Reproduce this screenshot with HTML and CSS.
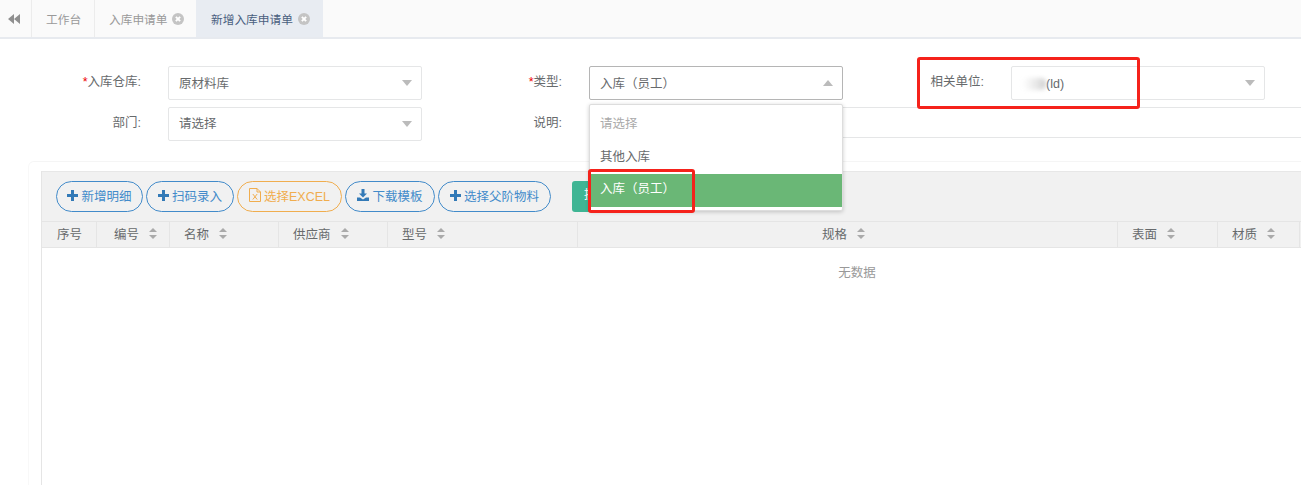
FILE: index.html
```html
<!DOCTYPE html>
<html lang="zh-CN">
<head>
    <meta charset="UTF-8">
    <title>新增入库申请单</title>
    <link rel="stylesheet" href="styles.css">
</head>
<body>

<div class="tabs">
    <div class="tab tab-back">
        <svg width="12" height="10" viewBox="0 0 12 10"><path d="M6 0v10L0 5zM12 0v10L6 5z" fill="#8f8f8f"/></svg>
    </div>
    <div class="tab tab-home">工作台</div>
    <div class="tab tab-list">入库申请单<span class="tab-close"></span></div>
    <div class="tab tab-active">新增入库申请单<span class="tab-close"></span></div>
</div>

<div class="form">
    <div class="item">
        <label><i>*</i>入库仓库:</label>
        <div class="select dark">原材料库<b class="arrow"></b></div>
    </div>
    <div class="item">
        <label><i>*</i>类型:</label>
        <div class="select open">入库（员工）<b class="arrow up"></b></div>
    </div>
    <div class="item">
        <label>相关单位:</label>
        <div class="select dark"><span class="smudge"></span>(ld)<b class="arrow"></b></div>
    </div>
    <div class="item">
        <label>部门:</label>
        <div class="select">请选择<b class="arrow"></b></div>
    </div>
    <div class="item item-wide">
        <label>说明:</label>
        <div class="note"></div>
    </div>
</div>

<div class="main">
    <div class="panel">
        <div class="toolbar">
            <a class="btn w1"><svg width="11" height="11" viewBox="0 0 11 11"><path d="M4 0h3v4h4v3H7v4H4V7H0V4h4z"/></svg>新增明细</a>
            <a class="btn w2"><svg width="11" height="11" viewBox="0 0 11 11"><path d="M4 0h3v4h4v3H7v4H4V7H0V4h4z"/></svg>扫码录入</a>
            <a class="btn btn-excel"><svg width="12" height="14" viewBox="0 0 12 14"><path d="M.5.5h7.500l3.500 3.500v9.500H.5zM8 .5V4h3.500M3.800 6l4.400 5.500M8.200 6l-4.400 5.500" fill="none" stroke="#f0ad4e"/></svg>选择EXCEL</a>
            <a class="btn w3"><svg width="12" height="12" viewBox="0 0 12 12"><path d="M4.500 0h3v4.500H10L6 8.500 2 4.500h2.500zM0 8.500h3l3 2 3-2h3V12H0z"/></svg>下载模板</a>
            <a class="btn w4"><svg width="11" height="11" viewBox="0 0 11 11"><path d="M4 0h3v4h4v3H7v4H4V7H0V4h4z"/></svg>选择父阶物料</a>
            <a class="btn-teal">提</a>
        </div>
        <div class="thead">
            <div class="th th-no">序号</div>
            <div class="th th-code">编号<span class="sort"></span></div>
            <div class="th">名称<span class="sort"></span></div>
            <div class="th">供应商<span class="sort"></span></div>
            <div class="th">型号<span class="sort"></span></div>
            <div class="th th-center">规格<span class="sort"></span></div>
            <div class="th">表面<span class="sort"></span></div>
            <div class="th">材质<span class="sort"></span></div>
        </div>
        <div class="empty">无数据</div>
    </div>
</div>

<!-- 下拉层 -->
<ul class="dropdown">
    <li class="hint">请选择</li>
    <li>其他入库</li>
    <li class="on">入库（员工）</li>
</ul>

<!-- 截图上的红框标注 -->
<div class="mark mark-unit"></div>
<div class="mark mark-type"></div>

</body>
</html>
```

FILE: styles.css
```css
* {
    margin: 0;
    padding: 0;
    box-sizing: border-box;
    list-style: none;
}

html, body {
    width: 100%;
    height: 100%;
    overflow: hidden;
}

body {
    background: #fff;
    color: #676a6c;
    font-family: "Liberation Sans", "Noto Sans CJK SC", sans-serif;
    font-size: 12.5px;
}

/* 顶部标签 */
.tabs {
    display: flex;
    height: 39px;
    background: #fafafa;
    border-bottom: 2px solid #e7eaef;
}
.tab {
    display: flex;
    align-items: center;
    height: 37px;
    font-size: 11.7px;
    color: #999;
    border-right: 1px solid #ececec;
}
.tab-back {
    width: 32px;
    justify-content: center;
    padding-right: 3px;
}
.tab-home {
    width: 63px;
    padding-left: 14px;
}
.tab-list {
    width: 101px;
    padding-left: 14px;
    border-right: none;
}
.tab-active {
    width: 127px;
    padding-left: 15px;
    background: #e8ecf2;
    color: #4a5f80;
    border-right: none;
}
.tab-close {
    position: relative;
    width: 12px;
    height: 12px;
    margin-left: 5px;
    border-radius: 50%;
    background: #c4c4c4;
}
.tab-close::before,
.tab-close::after {
    content: "";
    position: absolute;
    left: 3px;
    top: 5px;
    width: 6px;
    height: 2px;
    background: #fff;
    transform: rotate(45deg);
}
.tab-close::after {
    transform: rotate(-45deg);
}

/* 表单 */
.form {
    display: grid;
    grid-template-columns: 421px 422px 421px;
    align-content: start;
    row-gap: 7px;
    padding: 27px 0 0 41px;
    height: 122px;
}
.item {
    display: flex;
    align-items: flex-start;
}
.item-wide {
    grid-column: span 2;
}
.item label {
    flex: none;
    width: 100px;
    margin-right: 27px;
    line-height: 33px;
    text-align: right;
    color: #676a6c;
}
.item label i {
    color: #e00;
    font-style: normal;
}
.select {
    position: relative;
    width: 254px;
    height: 34px;
    padding-left: 10px;
    line-height: 33px;
    background: #fff;
    border: 1px solid #e5e6e7;
    border-radius: 2px;
}
.select.dark {
    line-height: 35px;
}
.select.open {
    border-color: #b5b5b5;
    line-height: 34px;
}
.smudge {
    display: inline-block;
    width: 24px;
    height: 12px;
    vertical-align: -2px;
    background: linear-gradient(90deg, #fff 0, #f0f0f0 40%, #e0e0e0 75%, #ccc 100%);
    border-radius: 5px;
    filter: blur(2px);
}
.arrow {
    position: absolute;
    right: 9px;
    top: 13px;
    border-left: 5px solid transparent;
    border-right: 5px solid transparent;
    border-top: 6px solid #bbb;
}
.arrow.up {
    border-top: none;
    border-bottom: 6px solid #bbb;
}
.note {
    width: 714px;
    height: 31px;
    border: 1px solid #e5e6e7;
}

/* 明细区域 */
.main {
    margin-left: 28px;
    height: 324px;
    padding: 9px 0 0 12px;
    border-top: 1px solid #f5f5f5;
    border-left: 1px solid #f8f8f8;
    border-top-left-radius: 6px;
}
.panel {
    height: 320px;
    border-left: 1px solid #e5e5e5;
}
.toolbar {
    display: flex;
    align-items: center;
    gap: 3px;
    height: 50px;
    padding-left: 14px;
    background: #f1f1f1;
    border-top: 1px solid #e7e7e7;
}
.btn {
    display: flex;
    align-items: center;
    justify-content: center;
    gap: 3px;
    height: 31px;
    padding-bottom: 3px;
    color: #428bca;
    background: #f1f1f1;
    border: 1px solid #428bca;
    border-radius: 16px;
}
.btn svg {
    fill: #337ab7;
}
.w1 { width: 87px; }
.w2 { width: 88px; }
.w3 { width: 90px; }
.w4 { width: 113px; }
.btn-excel {
    width: 105px;
    color: #f0ad4e;
    border-color: #f0ad4e;
}
.btn-teal {
    width: 80px;
    height: 31px;
    margin-left: 18px;
    padding-left: 12px;
    line-height: 29px;
    color: #fff;
    background: #3fb594;
    border-radius: 3px;
}
.thead {
    display: grid;
    grid-template-columns: 55px 73px 109px 109px 190px 540px 100px 82px;
    height: 27px;
    background: #f1f1f1;
    border-top: 1px solid #e5e5e5;
    border-bottom: 1px solid #e5e5e5;
}
.th {
    display: flex;
    align-items: center;
    padding-left: 14px;
    padding-bottom: 2px;
    border-right: 1px solid #e5e5e5;
}
.th-no {
    padding-left: 15px;
}
.th-code {
    padding-left: 17px;
}
.th-center {
    justify-content: center;
    padding-left: 0;
    padding-right: 8px;
}
.sort {
    position: relative;
    width: 8px;
    height: 11px;
    margin-left: 10px;
}
.sort::before,
.sort::after {
    content: "";
    position: absolute;
    left: 0;
    border-left: 4px solid transparent;
    border-right: 4px solid transparent;
}
.sort::before {
    top: 0;
    border-bottom: 4px solid #aaa;
}
.sort::after {
    bottom: 0;
    border-top: 4px solid #aaa;
}
.empty {
    padding: 14px 0 0 371px;
    text-align: center;
    color: #999;
}

/* 下拉层 */
.dropdown {
    position: absolute;
    left: 589px;
    top: 104px;
    width: 254px;
    height: 107px;
    padding-top: 3px;
    background: #fff;
    border: 1px solid #ddd;
    border-radius: 2px;
    box-shadow: 0 1px 4px rgba(0, 0, 0, .2);
}
.dropdown li {
    height: 33px;
    padding-left: 10px;
    line-height: 33px;
}
.dropdown .hint {
    color: #aaa;
}
.dropdown .on {
    background: #6ab776;
    color: #fff;
    line-height: 31px;
}

/* 红框 */
.mark {
    position: absolute;
    border: 3px solid #f5221b;
    border-radius: 3px;
}
.mark-unit {
    left: 917px;
    top: 57px;
    width: 223px;
    height: 52px;
}
.mark-type {
    left: 588px;
    top: 169px;
    width: 107px;
    height: 44px;
}
```
